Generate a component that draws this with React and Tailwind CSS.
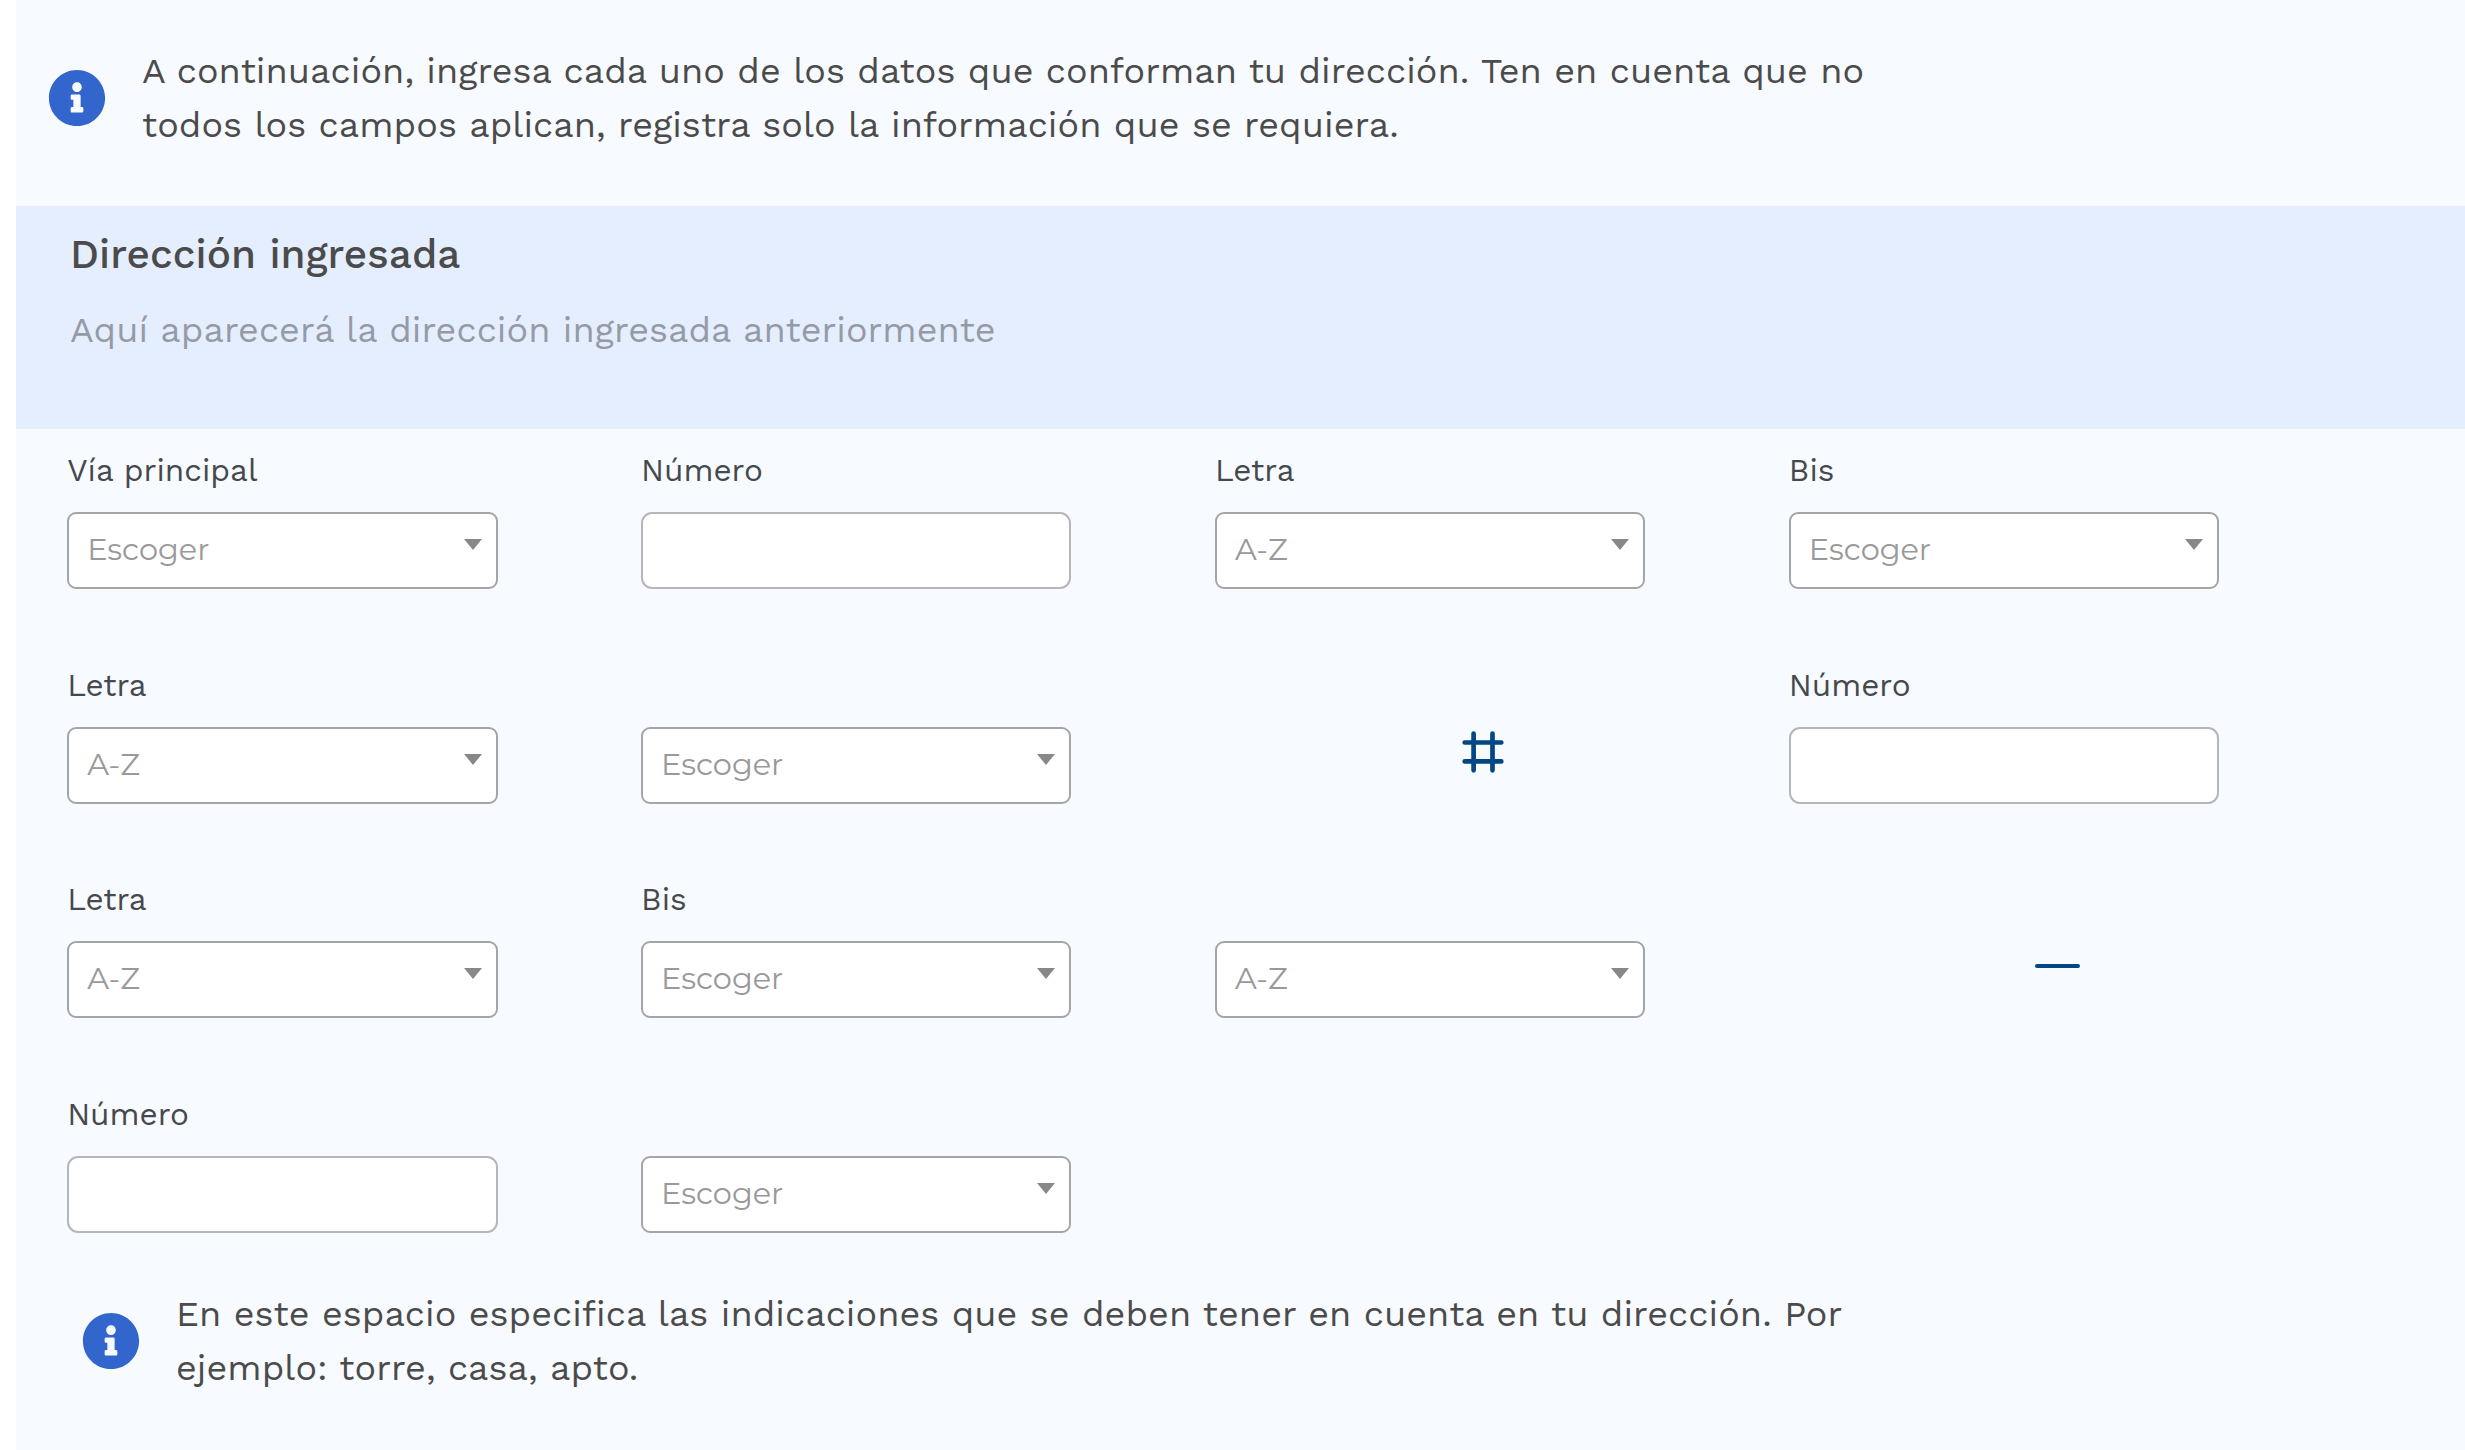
import { FaInfoCircle } from "react-icons/fa";

function Caret() {
  return (
    <svg className="mt-[25px] shrink-0" width="18" height="11" viewBox="0 0 18 11" fill="#888888" aria-hidden="true">
      <path d="M0 0h18L9 11z" />
    </svg>
  );
}

function Field({ label, placeholder, input }) {
  return (
    <div className="flex w-[430.3px] flex-col first:w-[431px]">
      <span className="h-10 text-[31.5px] leading-10 text-[#45484c]">{label}</span>
      {input ? (
        <div className="mt-[21px] h-[77px] rounded-[11px] border-2 border-[#b5b6b9] bg-white" />
      ) : (
        <div className="mt-[21px] flex h-[77px] justify-between rounded-[9px] border-2 border-[#a4a5a7] bg-white pr-[14px] pl-[18px]">
          <span className="pt-4 font-[Montserrat,sans-serif] text-[30.4px] leading-10 text-[#999999]">
            {placeholder}
          </span>
          <Caret />
        </div>
      )}
    </div>
  );
}

function Separator({ kind }) {
  return (
    <div className="flex h-[172px] w-[537px] items-center justify-center">
      {kind === "hash" ? (
        <svg width="42" height="42" viewBox="0 0 42 42" fill="none" stroke="#004884" strokeWidth="4.7" strokeLinecap="round">
          <path d="M2.7 11.5h36.6M2.7 30.4h36.6M11.6 2.7v36.6M30.5 2.7v36.6" />
        </svg>
      ) : (
        <div className="h-1 w-[45px] rounded-full bg-[#004884]" />
      )}
    </div>
  );
}

const rows = [
  [
    { label: "Vía principal", placeholder: "Escoger" },
    { label: "Número", input: true },
    { label: "Letra", placeholder: "A-Z" },
    { label: "Bis", placeholder: "Escoger" },
  ],
  [
    { label: "Letra", placeholder: "A-Z" },
    { placeholder: "Escoger" },
    { kind: "hash" },
    { label: "Número", input: true },
  ],
  [
    { label: "Letra", placeholder: "A-Z" },
    { label: "Bis", placeholder: "Escoger" },
    { placeholder: "A-Z" },
    { kind: "dash" },
  ],
  [
    { label: "Número", input: true },
    { placeholder: "Escoger" },
  ],
];

function Notice({ lines, className }) {
  return (
    <div className={"flex " + className}>
      <FaInfoCircle className="mt-[25.5px] size-[58px] shrink-0 text-[#3366cc]" />
      <p className="ml-9 text-[36px] leading-[54px] tracking-[0.06px] whitespace-nowrap text-[#4b4b4b]">
        {lines[0]}
        <br />
        {lines[1]}
      </p>
    </div>
  );
}

export default function App() {
  return (
    <div className="h-[1450px] w-[2465px] overflow-hidden bg-white pl-4 font-['Work_Sans',sans-serif]">
      <main className="flex h-full flex-col bg-[#f7faff]">
        <Notice
          className="h-[206px] shrink-0 pt-[43.6px] pl-8"
          lines={[
            "A continuación, ingresa cada uno de los datos que conforman tu dirección. Ten en cuenta que no",
            "todos los campos aplican, registra solo la información que se requiera.",
          ]}
        />
        <section className="h-[223px] shrink-0 bg-[#e5eefe] pt-[18px] pl-[54px]">
          <h2 className="text-[40.5px] leading-[60px] font-medium tracking-[0.05px] text-[#4b4b4b]">Dirección ingresada</h2>
          <p className="mt-[18.6px] text-[36px] leading-[54px] tracking-[0.06px] text-[#959ba6]">
            Aquí aparecerá la dirección ingresada anteriormente
          </p>
        </section>
        <section className="flex h-[857px] shrink-0 flex-col gap-[76.67px] pt-[22px] pl-[51.2px]">
          {rows.map((row, i) => (
            <div key={i} className="grid h-[138px] shrink-0 grid-cols-[repeat(4,573.9px)]">
              {row.map((cell, j) => (cell.kind ? <Separator key={j} {...cell} /> : <Field key={j} {...cell} />))}
            </div>
          ))}
        </section>
        <Notice
          className="pt-[0.6px] pl-[66px]"
          lines={[
            "En este espacio especifica las indicaciones que se deben tener en cuenta en tu dirección. Por",
            "ejemplo: torre, casa, apto.",
          ]}
        />
      </main>
    </div>
  );
}
